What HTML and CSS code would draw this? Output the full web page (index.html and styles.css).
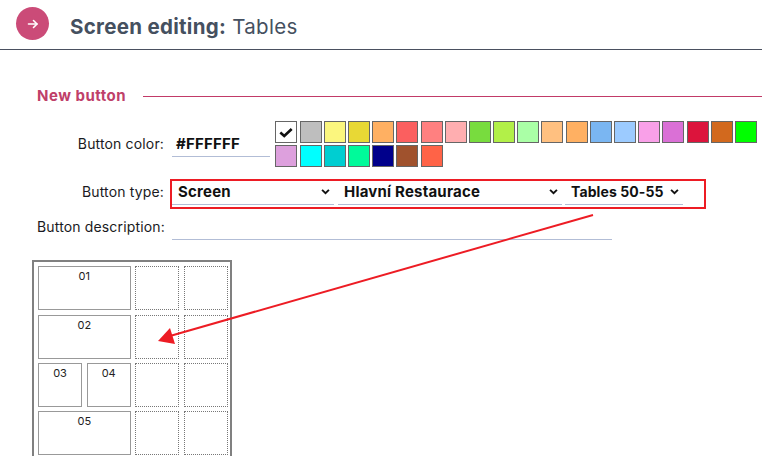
FILE: index.html
```html
<!DOCTYPE html>
<html>
<head>
    <title>Screen editing: Tables</title>
    <link rel="stylesheet" href="styles.css">
</head>
<body>
    <div class="header">
        <div class="back-btn">
            <svg viewBox="0 0 12 12" width="12" height="12" fill="none" stroke="#fff" stroke-width="1.6" stroke-linecap="round" stroke-linejoin="round">
                <line x1="1.5" y1="6" x2="10" y2="6"></line>
                <polyline points="6.5 2.5 10 6 6.5 9.5"></polyline>
            </svg>
        </div>
        <h1 class="title"><b>Screen editing:</b> Tables</h1>
    </div>

    <div class="content">
        <div class="section-title">
            <span class="section-text">New button</span>
            <div class="section-line"></div>
        </div>

        <div class="form-row color-row">
            <label class="form-label">Button color:</label>
            <div class="field color-field">#FFFFFF</div>
            <div class="swatches">
                <div class="swatch swatch-white">
                    <svg viewBox="0 0 16 12" width="14" height="11" fill="none" stroke="#111" stroke-width="3">
                        <polyline points="1.5 6 6 10 14.5 2"></polyline>
                    </svg>
                </div>
                <div class="swatch" style="background:#bebebe"></div>
                <div class="swatch" style="background:#fbf67e"></div>
                <div class="swatch" style="background:#e8d835"></div>
                <div class="swatch" style="background:#ffb062"></div>
                <div class="swatch" style="background:#fb5f5f"></div>
                <div class="swatch" style="background:#ff8080"></div>
                <div class="swatch" style="background:#ffaeb0"></div>
                <div class="swatch" style="background:#78dc3e"></div>
                <div class="swatch" style="background:#b2f048"></div>
                <div class="swatch" style="background:#aaffa6"></div>
                <div class="swatch" style="background:#ffc080"></div>
                <div class="swatch" style="background:#ffb062"></div>
                <div class="swatch" style="background:#7ab6f2"></div>
                <div class="swatch" style="background:#9ccbff"></div>
                <div class="swatch" style="background:#f9a0e8"></div>
                <div class="swatch" style="background:#da70d6"></div>
                <div class="swatch" style="background:#dc143c"></div>
                <div class="swatch" style="background:#d2691e"></div>
                <div class="swatch" style="background:#00ff00"></div>
                <div class="swatch" style="background:#dda0dd"></div>
                <div class="swatch" style="background:#00ffff"></div>
                <div class="swatch" style="background:#00ced1"></div>
                <div class="swatch" style="background:#00fa9a"></div>
                <div class="swatch" style="background:#00008b"></div>
                <div class="swatch" style="background:#a0522d"></div>
                <div class="swatch" style="background:#ff6347"></div>
            </div>
        </div>

        <div class="form-row type-row">
            <label class="form-label">Button type:</label>
            <div class="selects">
                <div class="field select select-screen">
                    <span>Screen</span>
                    <svg class="chevron" viewBox="0 0 10 7" width="9" height="6" fill="none" stroke="#111" stroke-width="2.2"><polyline points="1 1 5 5 9 1"></polyline></svg>
                </div>
                <div class="field select select-room">
                    <span>Hlavní Restaurace</span>
                    <svg class="chevron" viewBox="0 0 10 7" width="9" height="6" fill="none" stroke="#111" stroke-width="2.2"><polyline points="1 1 5 5 9 1"></polyline></svg>
                </div>
                <div class="field select select-tables">
                    <span>Tables 50-55</span>
                    <svg class="chevron" viewBox="0 0 10 7" width="9" height="6" fill="none" stroke="#111" stroke-width="2.2"><polyline points="1 1 5 5 9 1"></polyline></svg>
                </div>
            </div>
        </div>

        <div class="form-row desc-row">
            <label class="form-label">Button description:</label>
            <div class="field desc-field"></div>
        </div>

        <div class="screen-grid">
            <div class="cell wide">01</div>
            <div class="cell empty"></div>
            <div class="cell empty"></div>
            <div class="cell wide">02</div>
            <div class="cell empty"></div>
            <div class="cell empty"></div>
            <div class="cell">03</div>
            <div class="cell">04</div>
            <div class="cell empty"></div>
            <div class="cell empty"></div>
            <div class="cell wide">05</div>
            <div class="cell empty"></div>
            <div class="cell empty"></div>
        </div>
    </div>

    <!-- annotation drawn over the screenshot -->
    <div class="red-box"></div>
    <svg class="arrow" width="762" height="456" viewBox="0 0 762 456">
        <line x1="593" y1="215" x2="170" y2="336" stroke="#ed1c24" stroke-width="2"></line>
        <polygon points="158 341 170 328 175 344" fill="#ed1c24"></polygon>
    </svg>
</body>
</html>
```

FILE: styles.css
```css
* {
    margin: 0;
    padding: 0;
    box-sizing: border-box;
}

body {
    font-family: 'Inter', 'Noto Sans', Arial, sans-serif;
    background-color: #FFFFFF;
    color: #1a1a22;
    height: 456px;
    overflow: hidden;
    position: relative;
}

.header {
    height: 50px;
    border-bottom: 1px solid #4a5060;
    padding-left: 16px;
    display: flex;
    align-items: center;
    gap: 21px;
}

.back-btn {
    width: 33px;
    height: 33px;
    margin-bottom: 2px;
    border-radius: 50%;
    background-color: #cb4b78;
    display: flex;
    align-items: center;
    justify-content: center;
}

.title {
    padding-top: 3px;
    font-size: 20.5px;
    font-weight: 400;
    color: #45505f;
    letter-spacing: 0.3px;
}

.title b {
    font-weight: 700;
}

.content {
    padding-left: 37px;
}

.section-title {
    height: 20px;
    margin-top: 36px;
    display: flex;
    align-items: center;
    gap: 17px;
    font-size: 15px;
    letter-spacing: 0.5px;
    font-weight: 700;
    color: #bf4069;
}

.section-text {
    padding-bottom: 2px;
}

.section-line {
    flex: 1;
    height: 1px;
    background-color: #c23a68;
}

.form-row {
    display: flex;
}

.form-label {
    width: 127px;
    margin-right: 8px;
    text-align: right;
    font-size: 14px;
    letter-spacing: 0.15px;
    flex-shrink: 0;
    white-space: nowrap;
}

.field {
    border-bottom: 1px solid #b2bdd6;
    font-size: 15px;
    letter-spacing: 0.2px;
    font-weight: 700;
    color: #111;
}

.color-row {
    margin-top: 15px;
}

.color-row .form-label {
    padding-top: 14px;
}

.color-field {
    width: 98px;
    height: 36px;
    padding: 13px 0 0 4px;
    margin-right: 5.4px;
}

.swatches {
    width: 486px;
    display: flex;
    flex-wrap: wrap;
    gap: 2px 2.2px;
}

.swatch {
    width: 22px;
    height: 22px;
    border: 1.5px solid #666;
}

.swatch-white {
    background-color: #fff;
    display: flex;
    align-items: center;
    justify-content: center;
}

.type-row {
    margin-top: 16px;
}

.selects {
    display: flex;
}

.select {
    height: 22px;
    padding: 0 4.5px 4px 6px;
    display: flex;
    justify-content: space-between;
    align-items: center;
}

.select-screen {
    width: 162px;
    margin-right: 4px;
}

.select-room {
    width: 224px;
    margin-right: 3px;
}

.select-tables {
    width: 118px;
    font-size: 14px;
    letter-spacing: 0.1px;
}

.desc-row {
    margin-top: 13px;
}

.desc-field {
    width: 440px;
    height: 22px;
}

/* cut off by the window in the reference, so no bottom border */
.screen-grid {
    width: 200px;
    height: 196px;
    margin-top: 20px;
    margin-left: -5px;
    border: 2px solid #808080;
    border-bottom: none;
    padding: 4.3px 0 0 4px;
    display: grid;
    grid-template-columns: repeat(4, 44px);
    grid-auto-rows: 44px;
    gap: 4.3px 4.67px;
}

.cell {
    border: 1px solid #999;
    text-align: center;
    font-size: 11px;
    padding-top: 2px;
    color: #222;
}

.wide {
    grid-column: span 2;
}

.empty {
    border: 1px dotted #777;
}

.red-box {
    position: absolute;
    left: 170px;
    top: 179px;
    width: 536px;
    height: 30px;
    border: 2px solid #ed1c24;
}

.arrow {
    position: absolute;
    left: 0;
    top: 0;
}
```
